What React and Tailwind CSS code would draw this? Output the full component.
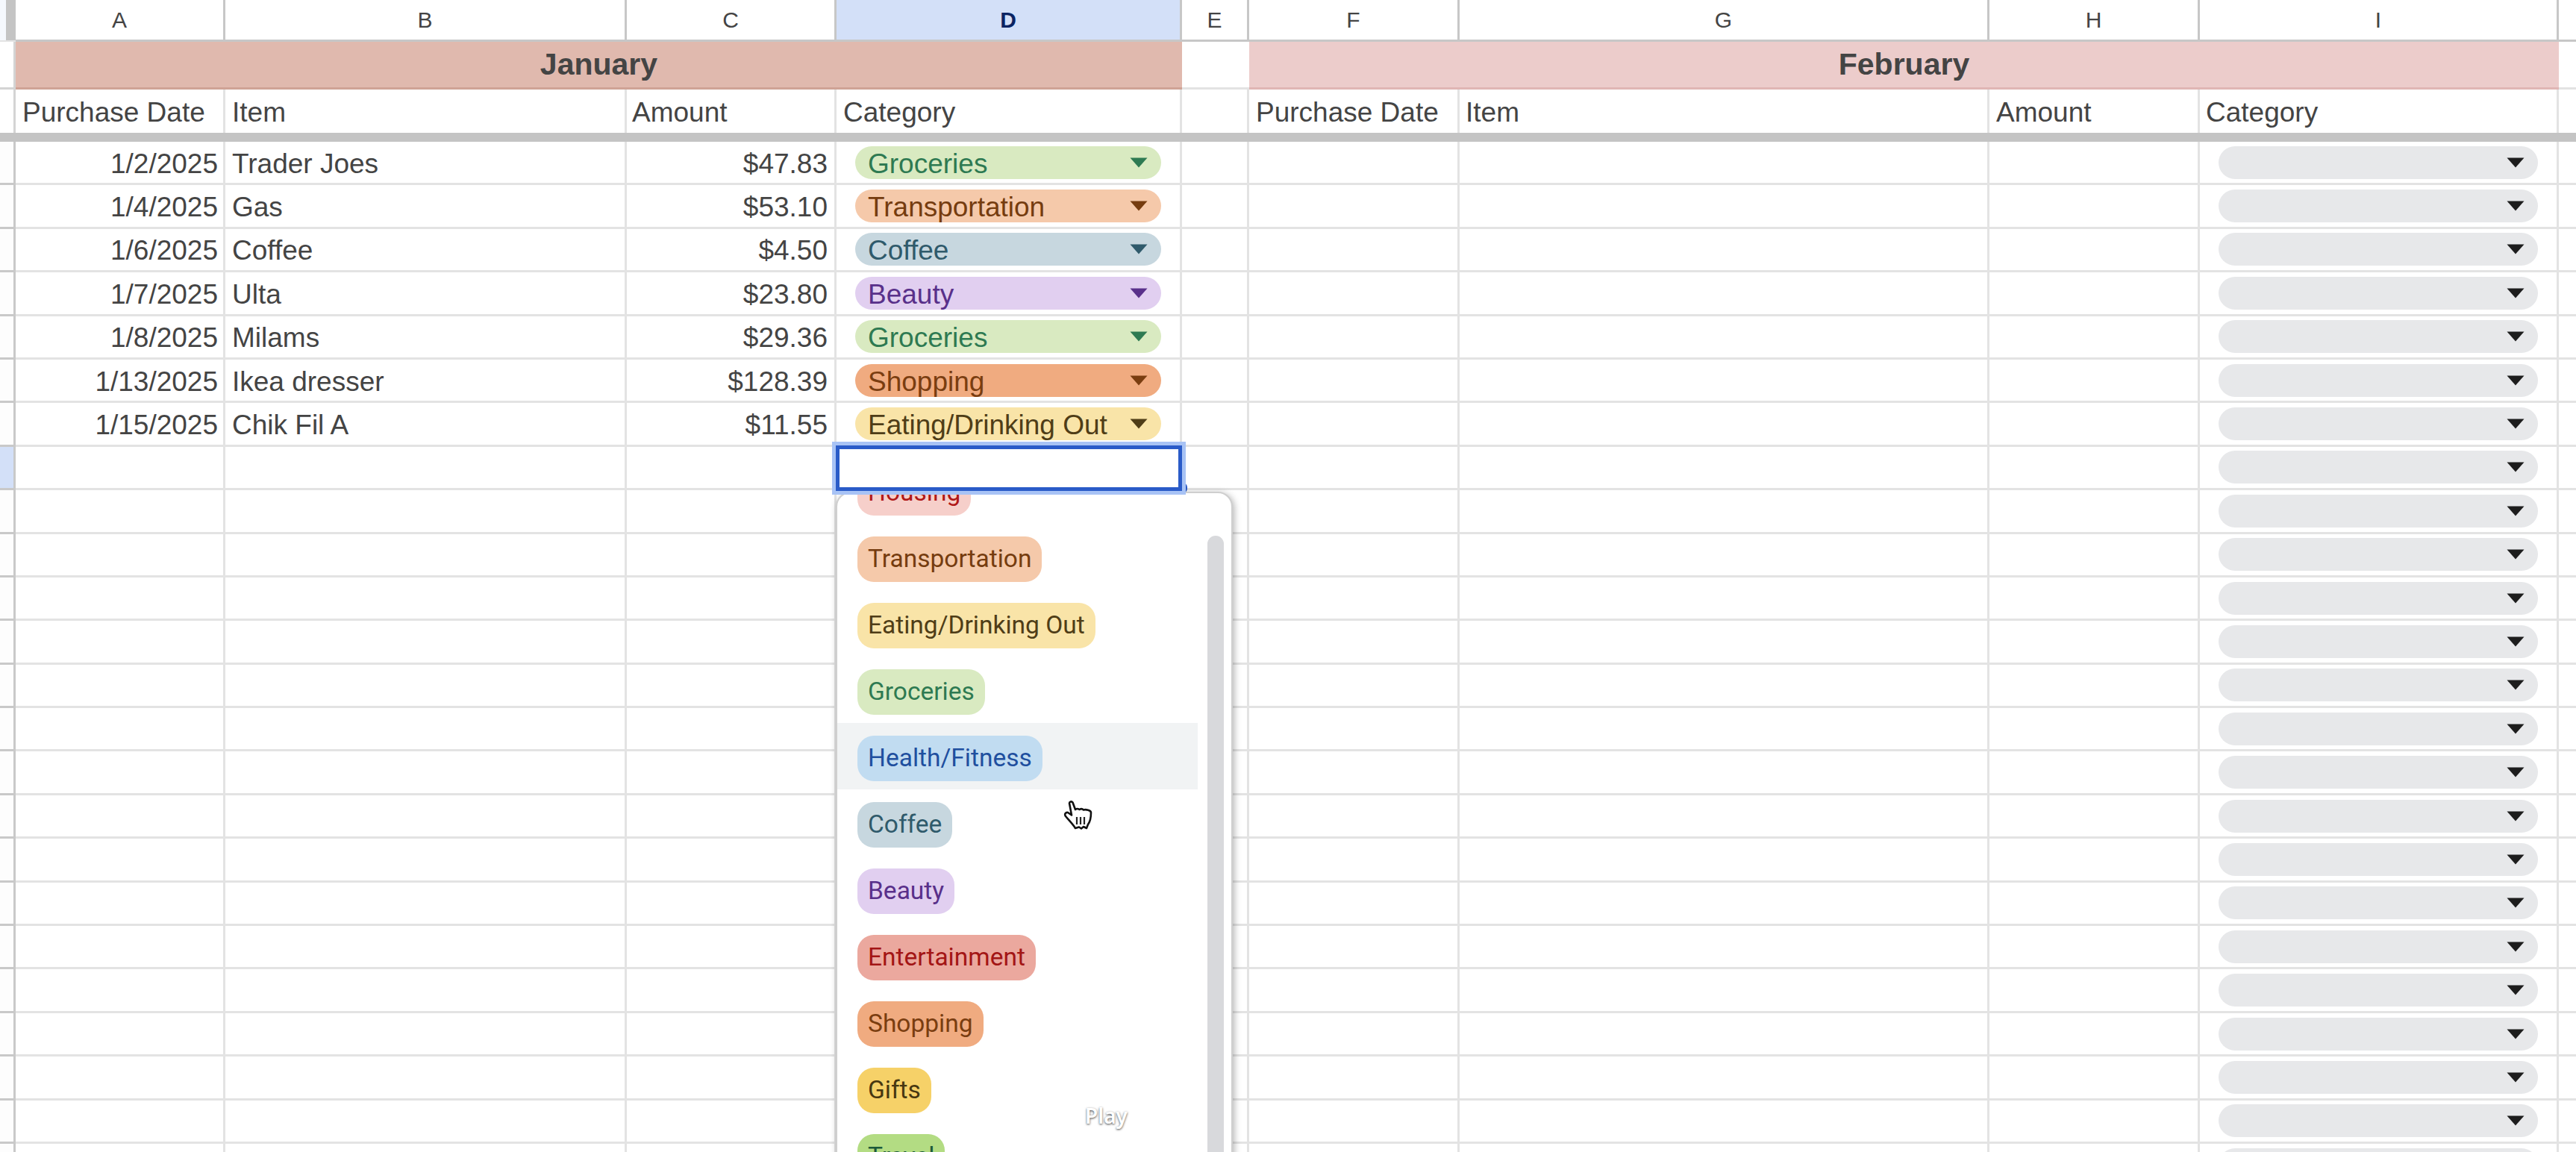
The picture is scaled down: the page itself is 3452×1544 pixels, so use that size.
const cols = "grid grid-cols-[21px_281px_538px_281px_463px_90px_282px_710px_282px_481px_1fr]";
const PILLS = {
  Groceries: { bg: "bg-[#d9eac1]", text: "text-[#2e7a52]", fill: "#2e7a52" },
  Transportation: { bg: "bg-[#f5c9aa]", text: "text-[#753c0f]", fill: "#753c0f" },
  Coffee: { bg: "bg-[#c7d7df]", text: "text-[#2f5a6b]", fill: "#2f5a6b" },
  Beauty: { bg: "bg-[#e1cff0]", text: "text-[#59308a]", fill: "#59308a" },
  Shopping: { bg: "bg-[#f0ab80]", text: "text-[#7a3d10]", fill: "#7a3d10" },
  "Eating/Drinking Out": { bg: "bg-[#f9e4a8]", text: "text-[#4f3d17]", fill: "#4f3d17" },
  Housing: { bg: "bg-[#f6cfca]", text: "text-[#b01818]" },
  "Health/Fitness": { bg: "bg-[#c1dcf1]", text: "text-[#1f4f9f]" },
  Entertainment: { bg: "bg-[#eba89e]", text: "text-[#a31515]" },
  Gifts: { bg: "bg-[#f6d168]", text: "text-[#473710]" },
  Travel: { bg: "bg-[#b3dc83]", text: "text-[#1c5a3a]" },
};
const DATA = [
  ["1/2/2025", "Trader Joes", "$47.83", "Groceries"],
  ["1/4/2025", "Gas", "$53.10", "Transportation"],
  ["1/6/2025", "Coffee", "$4.50", "Coffee"],
  ["1/7/2025", "Ulta", "$23.80", "Beauty"],
  ["1/8/2025", "Milams", "$29.36", "Groceries"],
  ["1/13/2025", "Ikea dresser", "$128.39", "Shopping"],
  ["1/15/2025", "Chik Fil A", "$11.55", "Eating/Drinking Out"],
];
const MENU = ["Housing", "Transportation", "Eating/Drinking Out", "Groceries", "Health/Fitness", "Coffee", "Beauty", "Entertainment", "Shopping", "Gifts", "Travel"];
const ROWS = Array.from({ length: 24 }, (_, i) => i);

function Arrow({ fill }) {
  return (
    <svg width="24" height="14" viewBox="0 0 24 14" className="shrink-0">
      <path d="M0.5 0.5H23.5L12 13.5Z" fill={fill} />
    </svg>
  );
}

function Chip({ name, bg, text, fill }) {
  return (
    <div className={`flex h-[44px] w-full items-center justify-between rounded-full pl-[17px] pr-[18px] ${bg}`}>
      <span className={`pt-[3px] text-[37px] leading-none ${text}`}>{name}</span>
      <Arrow fill={fill} />
    </div>
  );
}

function Cell({ className = "", pad = "px-[9px] pt-[3px]", children }) {
  return (
    <div className={`flex min-w-0 items-center whitespace-nowrap border-r-[3px] border-[#e3e3e3] ${pad} ${className}`}>
      {children}
    </div>
  );
}

function HeadCell({ children, active }) {
  return (
    <div
      className={`flex items-center justify-center border-b-[3px] border-r-[3px] border-[#c7c7c7] text-[30px] ${
        active ? "bg-[#d3e0f8] font-bold text-[#0b2463]" : "bg-white text-[#444444]"
      }`}
    >
      {children}
    </div>
  );
}

function Hand() {
  return (
    <svg width="40" height="42" viewBox="0 0 40 42" className="absolute left-[303px] top-[411px]">
      <path
        d="M8 4.5C8 2.5 11 1.5 12.5 3.5L16 13C18 11.5 20 12 21.5 13C24 11.5 26 12.5 27 13.5C30 12.5 37 14 37 17C37 24 36 29 33 33L31 38L27 36L24 38.5L21 36.5L16 38C13 33 7 27 3 22C1 19 3 16.5 6 17L11 20.5Z"
        fill="#fff"
        stroke="#111"
        strokeWidth="2.6"
        strokeLinejoin="round"
      />
      <path d="M18 23V33M23 23V33M28 23V33" stroke="#222" strokeWidth="2.2" fill="none" />
    </svg>
  );
}

function Dropdown() {
  return (
    <div className="absolute left-[-1px] top-[60px] z-10 h-[900px] w-[532px] overflow-hidden rounded-t-[20px] border-2 border-[#cfcfcf] bg-white shadow-[2px_2px_10px_rgba(0,0,0,0.3)]">
      <div className="mt-[-48px] w-[483px]">
        {MENU.map((m) => (
          <div key={m} className={`flex h-[89px] items-start pl-[27px] pt-[17px] ${m === "Health/Fitness" ? "bg-[#f1f3f4]" : ""}`}>
            <span
              className={`flex h-[61px] items-center rounded-[22px] px-[14px] text-[33.5px] ${PILLS[m].bg} ${PILLS[m].text}`}
              style={{ fontFamily: "Roboto, sans-serif" }}
            >
              {m}
            </span>
          </div>
        ))}
      </div>
      <div className="absolute left-[496px] top-[57px] h-[900px] w-[22px] rounded-full bg-[#d8d9dc]" />
      <Hand />
      <span
        className="absolute left-[332px] top-[820px] text-[28px] font-semibold leading-none text-white [text-shadow:0_1px_3px_rgba(0,0,0,0.75)]"
        style={{ fontFamily: "'Noto Sans', sans-serif" }}
      >
        Play
      </span>
    </div>
  );
}

export default function App() {
  return (
    <div
      className="h-[1544px] w-[3452px] overflow-hidden bg-white text-[37px] leading-none text-[#444444]"
      style={{ fontFamily: "'Liberation Sans', Arial, sans-serif" }}
    >
      <div className={`${cols} h-[56px]`}>
        <div className="flex border-b-[2px] border-[#e3e3e3]">
          <div className="w-[8px] bg-[#f5f8fd]" />
          <div className="w-[13px] bg-[#c4c4c4]" />
        </div>
        {["A", "B", "C"].map((c) => (
          <HeadCell key={c}>{c}</HeadCell>
        ))}
        <HeadCell active>D</HeadCell>
        {["E", "F", "G", "H", "I"].map((c) => (
          <HeadCell key={c}>{c}</HeadCell>
        ))}
        <div className="border-b-[3px] border-[#c7c7c7]" />
      </div>

      <div className={`${cols} h-[64px]`}>
        <div className="border-b-[3px] border-r-[3px] border-[#d4d4d4]" />
        <div className="col-span-4 flex items-center justify-center border-b-[3px] border-[#cfa396] bg-[#e0b9ae] text-[41px] font-bold">January</div>
        <div className="border-b-[3px] border-[#e3e3e3]" />
        <div className="col-span-4 flex items-center justify-center border-b-[3px] border-[#e0b6b4] bg-[#eccccb] text-[41px] font-bold">February</div>
        <div className="border-b-[3px] border-[#e3e3e3]" />
      </div>

      <div className={`${cols} h-[58px]`}>
        <div className="border-r-[3px] border-[#d4d4d4]" />
        <Cell>Purchase Date</Cell>
        <Cell>Item</Cell>
        <Cell pad="px-[7px] pt-[3px]">Amount</Cell>
        <Cell>Category</Cell>
        <Cell />
        <Cell>Purchase Date</Cell>
        <Cell pad="px-[8px] pt-[3px]">Item</Cell>
        <Cell>Amount</Cell>
        <Cell pad="px-[8px] pt-[3px]">Category</Cell>
        <div />
      </div>

      <div className="h-[12px] bg-[#c4c4c4]" />

      {ROWS.map((i) => {
        const row = DATA[i];
        const selected = i === 7;
        const line = "border-b-[3px]";
        return (
          <div key={i} className={`${cols} h-[58.4px]`}>
            <div className={`border-b-[3px] border-r-[3px] border-[#c9c9c9] ${selected ? "bg-[#d3e0f8]" : "bg-[#fdfdfd]"}`} />
            <Cell className={`${line} justify-end`} pad="pl-[9px] pr-[7px] pt-[3px]">{row && row[0]}</Cell>
            <Cell className={line}>{row && row[1]}</Cell>
            <Cell className={`${line} justify-end`}>{row && row[2]}</Cell>
            {row ? (
              <Cell className={line} pad="px-[25px]">
                <Chip name={row[3]} {...PILLS[row[3]]} />
              </Cell>
            ) : (
              <Cell className={`${line} relative`}>
                {selected && (
                  <>
                    <div className="absolute left-[-6px] top-[-7px] z-20 h-[71px] w-[474px] border-[5px] border-[#a8c3f5]">
                      <div className="h-full w-full border-[5px] border-[#2a5bc8] bg-white" />
                    </div>
                    <div className="absolute left-[458px] top-[48px] z-0 h-[14px] w-[12px] rounded-full bg-[#2a5bc8]" />
                    <Dropdown />
                  </>
                )}
              </Cell>
            )}
            <Cell className={line} />
            <Cell className={line} />
            <Cell className={line} />
            <Cell className={line} />
            <Cell className={line} pad="px-[25px]">
              <Chip name="" bg="bg-[#e7e8ea]" text="" fill="#1d1d1d" />
            </Cell>
            <div className="border-b-[3px] border-[#e3e3e3]" />
          </div>
        );
      })}
    </div>
  );
}
